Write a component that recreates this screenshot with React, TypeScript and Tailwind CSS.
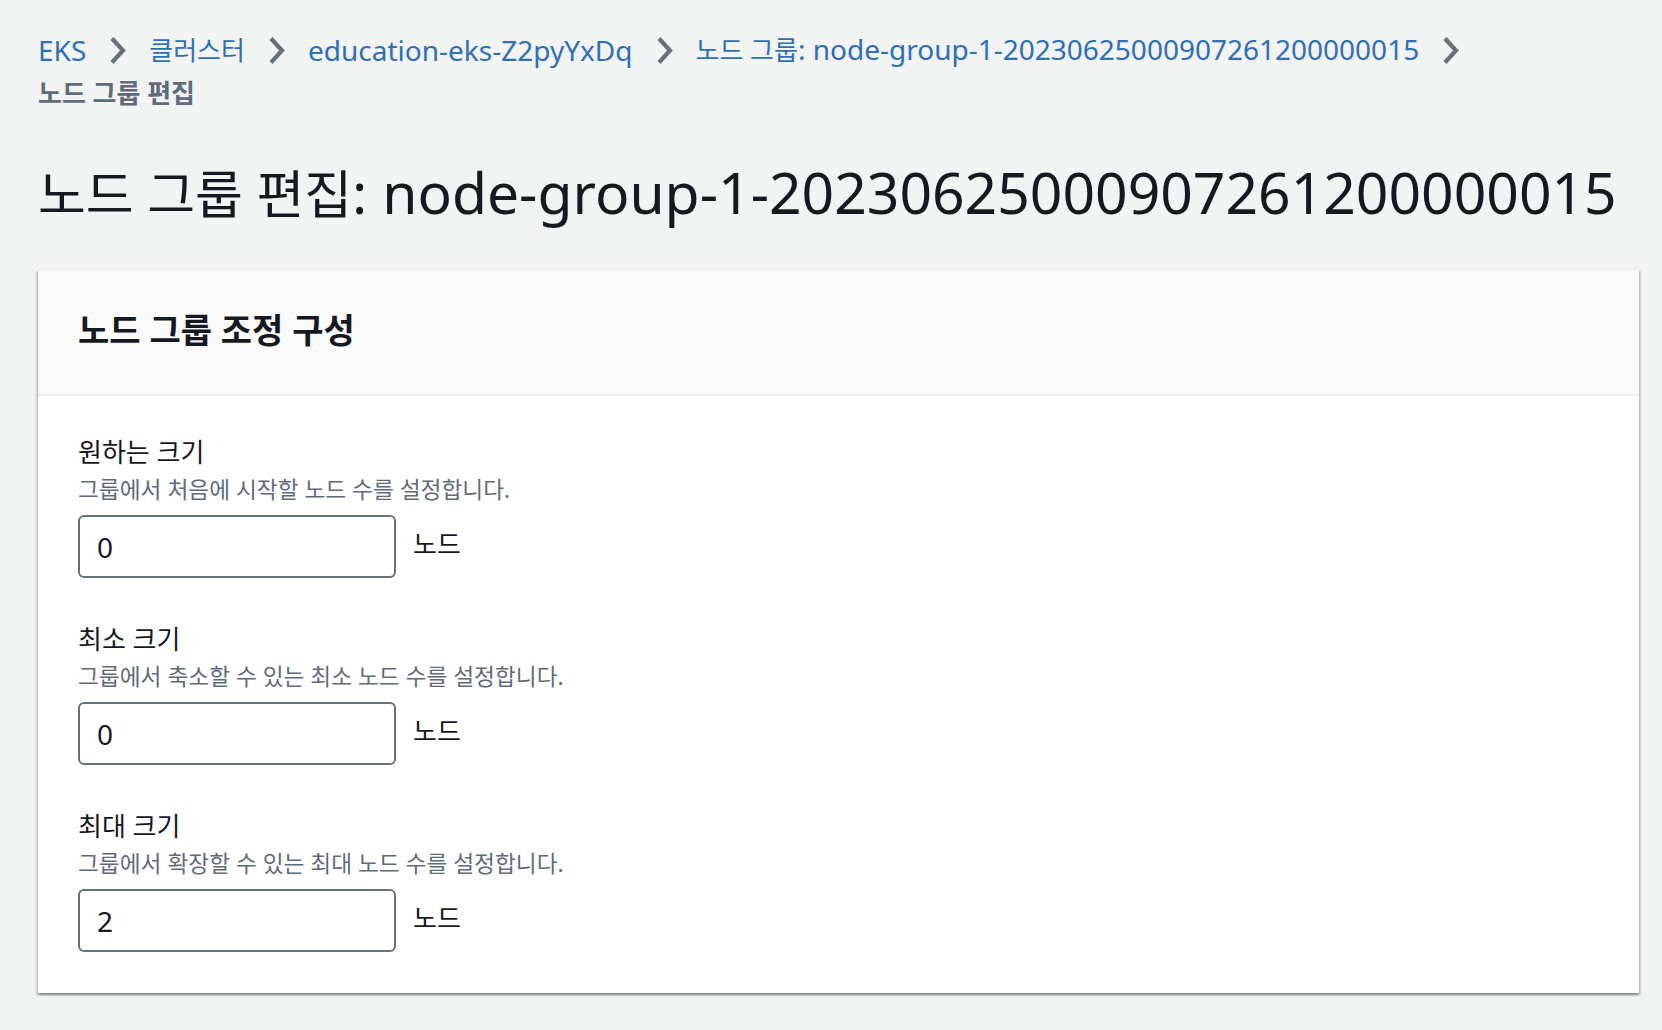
import { ChangeEvent, useState } from "react";

type Crumb = {
  label: React.ReactNode;
  href?: string;
};

const crumbs: Crumb[] = [
  { label: "EKS", href: "#" },
  { label: <span className="text-[26px]">클러스터</span>, href: "#" },
  { label: "education-eks-Z2pyYxDq", href: "#" },
  {
    label: (
      <>
        <span className="text-[26px]">노드 그룹</span>
        : node-group-1-20230625000907261200000015
      </>
    ),
    href: "#",
  },
];

type Field = {
  id: string;
  label: string;
  description: string;
  value: string;
};

const initialFields: Field[] = [
  {
    id: "desired",
    label: "원하는 크기",
    description: "그룹에서 처음에 시작할 노드 수를 설정합니다.",
    value: "0",
  },
  {
    id: "min",
    label: "최소 크기",
    description: "그룹에서 축소할 수 있는 최소 노드 수를 설정합니다.",
    value: "0",
  },
  {
    id: "max",
    label: "최대 크기",
    description: "그룹에서 확장할 수 있는 최대 노드 수를 설정합니다.",
    value: "2",
  },
];

function Chevron() {
  return (
    <svg
      width="17"
      height="29"
      viewBox="0 0 17 29"
      className="mx-[23px] shrink-0"
      aria-hidden
    >
      <polyline
        points="3,2.5 14,14.5 3,26.5"
        fill="none"
        stroke="#687078"
        strokeWidth="4.2"
      />
    </svg>
  );
}

function Breadcrumbs() {
  return (
    <nav aria-label="Breadcrumbs">
      <ol className="flex flex-wrap items-center text-[28px] leading-[43px]">
        {crumbs.map((crumb, index) => (
          <li key={index} className="flex items-center whitespace-nowrap">
            <a href={crumb.href} className="text-[#2f6fb4] hover:underline">
              {crumb.label}
            </a>
            <Chevron />
          </li>
        ))}

        <li className="h-0 basis-full" aria-hidden />

        <li
          aria-current="page"
          className="text-[26px] font-bold text-[#5f6b7a]"
        >
          노드 그룹 편집
        </li>
      </ol>
    </nav>
  );
}

type SizeFieldProps = {
  field: Field;
  onChange: (id: string, value: string) => void;
};

function SizeField({ field, onChange }: SizeFieldProps) {
  return (
    <div>
      <label
        htmlFor={field.id}
        className="block text-[26px] leading-[40px] text-[#16191f]"
      >
        {field.label}
      </label>

      <p className="text-[22.7px] leading-[36px] text-[#5f6b7a]">
        {field.description}
      </p>

      <div className="mt-[7px] flex items-center gap-[17px]">
        <input
          id={field.id}
          type="text"
          inputMode="numeric"
          value={field.value}
          onChange={(event: ChangeEvent<HTMLInputElement>) =>
            onChange(field.id, event.target.value)
          }
          className="h-[63px] w-[318px] rounded-[6px] border-2 border-[#687078] bg-white px-[17px] text-[28px] text-[#16191f] outline-none"
        />

        <span className="-mt-[5px] text-[26px] text-[#16191f]">
          노드
        </span>
      </div>
    </div>
  );
}

export default function App() {
  const [fields, setFields] = useState(initialFields);

  const handleChange = (id: string, value: string) => {
    setFields((prev) =>
      prev.map((field) =>
        field.id === id ? { ...field, value } : field
      )
    );
  };

  return (
    <div className="min-h-screen bg-[#f2f3f3] pb-[36px] pl-[38px] pr-[23px] pt-[28px] font-['Noto_Sans','Noto_Sans_CJK_KR',sans-serif]">
      <Breadcrumbs />

      <h1 className="mt-[43px] whitespace-nowrap text-[57px] leading-[68px] text-[#16191f]">
        <span className="text-[52px]">노드 그룹 편집</span>
        : node-group-1-20230625000907261200000015
      </h1>

      <section className="mt-[41px] border-t border-[#eaeded] bg-white shadow-[0_2px_2px_0_rgba(0,28,36,0.3),2px_2px_2px_0_rgba(0,28,36,0.15),-2px_2px_2px_0_rgba(0,28,36,0.15)]">
        <header className="h-[126px] border-b-2 border-[#eaeded] bg-[#fafafa] px-[40px] pt-[36px]">
          <h2 className="text-[34px] font-bold leading-[48px] text-[#16191f]">
            노드 그룹 조정 구성
          </h2>
        </header>

        <div className="flex flex-col gap-[41px] px-[40px] pb-[41px] pt-[36px]">
          {fields.map((field) => (
            <SizeField
              key={field.id}
              field={field}
              onChange={handleChange}
            />
          ))}
        </div>
      </section>
    </div>
  );
}
